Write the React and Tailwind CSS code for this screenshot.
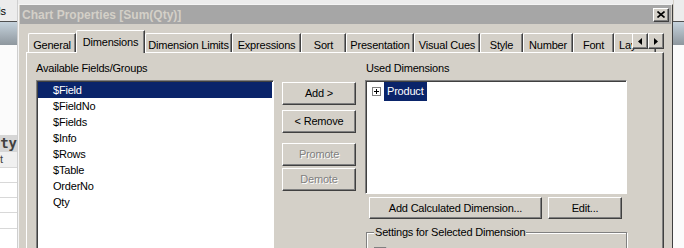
import React from 'react';

const font = { fontFamily: '"Liberation Sans", Arial, sans-serif' };

const raised =
  'border border-t-white border-l-white border-r-[#404040] border-b-[#404040] shadow-[inset_-1px_-1px_0_#808080] bg-[#d4d0c8]';
const sunken =
  'border border-t-[#808080] border-l-[#808080] border-r-white border-b-white shadow-[inset_1px_1px_0_#404040] bg-white';

const tabs = [
  { label: 'General', w: 'w-[48px]' },
  { label: 'Dimensions', w: 'w-[69px]', active: true },
  { label: 'Dimension Limits', w: 'w-[87px]' },
  { label: 'Expressions', w: 'w-[69px]' },
  { label: 'Sort', w: 'w-[45px]' },
  { label: 'Presentation', w: 'w-[68px]' },
  { label: 'Visual Cues', w: 'w-[66px]' },
  { label: 'Style', w: 'w-[43px]' },
  { label: 'Number', w: 'w-[50px]' },
  { label: 'Font', w: 'w-[41px]' },
  { label: 'Layout', w: 'w-[42px]' },
];

const fields = ['$Field', '$FieldNo', '$Fields', '$Info', '$Rows', '$Table', 'OrderNo', 'Qty'];

const Button = ({ children, disabled, className = '' }) => (
  <div className={`${raised} shrink-0 flex items-center justify-center text-[11px] tracking-[-0.2px] ${className} ${disabled ? 'text-[#808080] [text-shadow:1px_1px_0_#fff]' : 'text-black'}`}>
    {children}
  </div>
);

const Tab = ({ label, w, active }) =>
  active ? (
    <div className={`${w} h-[23px] -mb-px relative z-10 shrink-0 bg-[#d4d0c8] border-t border-l border-r border-t-white border-l-white border-r-[#404040] rounded-tl-[2px] shadow-[inset_-1px_0_0_#808080] flex justify-center pt-[3px] text-[11px] tracking-[-0.2px]`}>
      {label}
    </div>
  ) : (
    <div className={`${w} h-[19px] shrink-0 border-t border-l border-r border-t-white border-l-white border-r-[#404040] rounded-tl-[2px] shadow-[inset_-1px_0_0_#808080] flex justify-center pt-[3px] text-[11px] tracking-[-0.2px] whitespace-nowrap overflow-hidden`}>
      {label}
    </div>
  );

const ArrowBtn = ({ dir }) => (
  <div className={`${raised} w-[16px] h-[16px] shrink-0 flex items-center justify-center`}>
    <svg width="4" height="7" viewBox="0 0 4 7">
      {dir === 'left' ? <path d="M4 0 L0 3.5 L4 7 Z" fill="#000" /> : <path d="M0 0 L4 3.5 L0 7 Z" fill="#000" />}
    </svg>
  </div>
);

export default function App() {
  return (
    <div className="w-[684px] h-[248px] overflow-hidden flex bg-[#ececec] text-black" style={font}>
      {/* background app, left */}
      <div className="w-[18px] shrink-0 flex flex-col border-r border-r-[#cfcfcf] overflow-hidden">
        <div className="h-[21px] shrink-0 flex justify-end pr-[11px] pt-[3px] text-[11px] bg-[#ececec] overflow-hidden whitespace-nowrap">Fields</div>
        <div className="h-[24px] shrink-0 border-t border-t-[#505050] bg-gradient-to-b from-[#c6d3dd] to-[#8e979e]" />
        <div className="h-[90px] shrink-0 bg-[#fbfbfb]" />
        <div className="h-[17px] shrink-0 bg-[#d6d6d6] flex justify-end overflow-hidden">
          <span className="font-bold text-[14px] leading-[17px] text-[#404040] whitespace-nowrap" style={{ fontFamily: '"DejaVu Sans Mono", monospace' }}>Qty</span>
        </div>
        <div className="h-[16px] shrink-0 bg-[#f0f0f0] border-b border-b-[#d8d8d8] text-[11px] leading-[15px] text-[#404040]">t</div>
        <div className="h-[15px] shrink-0 bg-white border-b border-b-[#d8d8d8]" />
        <div className="h-[15px] shrink-0 bg-white border-b border-b-[#d8d8d8]" />
        <div className="h-[15px] shrink-0 bg-white border-b border-b-[#d8d8d8]" />
        <div className="h-[16px] shrink-0 bg-white border-b border-b-[#d8d8d8]" />
        <div className="flex-1 bg-white" />
      </div>

      {/* dialog */}
      <div className="w-[655px] shrink-0 mt-[4px] bg-[#d4d0c8] border-l border-t border-r border-l-[#f4f4f4] border-t-[#f4f4f4] border-r-[#404040] px-[1px] flex flex-col">
        <div className="h-[19px] shrink-0 bg-[#a6a6a6] flex items-center justify-between pl-[2px] pr-[2px]">
          <span className="text-[12px] font-bold text-[#d4d0c8]">Chart Properties [Sum(Qty)]</span>
          <div className={`${raised} w-[16px] h-[14px] flex items-center justify-center`}>
            <svg width="8" height="7" viewBox="0 0 8 7">
              <path d="M0.5 0.5 L7.5 6.5 M7.5 0.5 L0.5 6.5" stroke="#000" strokeWidth="1.6" />
            </svg>
          </div>
        </div>

        <div className="flex-1 pt-[6px] pl-[6px] pr-[7px]">
          {/* tab strip */}
          <div className="relative flex items-end pl-[2px] h-[22px]">
            {tabs.map((t) => (
              <Tab key={t.label} {...t} />
            ))}
            <div className="absolute right-0 top-[3px] z-20 flex">
              <ArrowBtn dir="left" />
              <ArrowBtn dir="right" />
            </div>
          </div>

          {/* tab panel */}
          <div className="h-[200px] border-t border-l border-r border-t-white border-l-white border-r-[#404040] shadow-[inset_-1px_0_0_#808080] flex text-[11px] tracking-[-0.2px]">
            <div className="ml-[9px] pt-[9px] w-[238px] shrink-0 flex flex-col">
              <div className="h-[13px] shrink-0 leading-[13px]">Available Fields/Groups</div>
              <div className={`${sunken} shrink-0 mt-[5px] h-[200px] p-px`}>
                {fields.map((f, i) => (
                  <div
                    key={f}
                    className={`h-[16px] leading-[16px] pl-[15px] ${i === 0 ? 'bg-[#0a246a] text-white' : ''}`}
                  >
                    {f}
                  </div>
                ))}
              </div>
            </div>

            <div className="ml-[8px] pt-[29px] w-[74px] shrink-0 flex flex-col">
              <Button className="h-[23px]">Add &gt;</Button>
              <Button className="h-[23px] mt-[5px]">&lt; Remove</Button>
              <Button className="h-[23px] mt-[10px]" disabled>Promote</Button>
              <Button className="h-[23px] mt-[2px]" disabled>Demote</Button>
            </div>

            <div className="ml-[9px] pt-[9px] w-[262px] shrink-0 flex flex-col">
              <div className="h-[13px] shrink-0 leading-[13px] pl-px">Used Dimensions</div>
              <div className={`${sunken} shrink-0 mt-[5px] h-[114px] p-px`}>
                <div className="h-[19px] flex items-center pl-[5px]">
                  <div className="w-[9px] h-[9px] border border-[#808080] bg-white flex items-center justify-center">
                    <svg width="5" height="5" viewBox="0 0 5 5">
                      <path d="M0 2.5 H5 M2.5 0 V5" stroke="#000" strokeWidth="1" />
                    </svg>
                  </div>
                  <div className="ml-[3px] h-[19px] px-[3px] flex items-center bg-[#0a246a] text-white">Product</div>
                </div>
              </div>
              <div className="flex shrink-0 mt-[3px] pl-[4px] gap-[6px]">
                <Button className="w-[173px] h-[22px]">Add Calculated Dimension...</Button>
                <Button className="w-[74px] h-[22px]">Edit...</Button>
              </div>
              <div className="shrink-0 ml-px mt-[13px] w-[261px] h-[40px] border border-[#808080] shadow-[inset_1px_1px_0_#fff,1px_1px_0_#fff]">
                <div className="-mt-[7px] ml-[7px] w-fit px-px bg-[#d4d0c8] leading-[13px]">Settings for Selected Dimension</div>
                <div className="flex items-center mt-[6px] ml-[7px] gap-[5px]">
                  <div className={`${sunken} w-[13px] h-[13px]`} />
                  <span>Enable Condition</span>
                </div>
              </div>
            </div>
          </div>
        </div>
      </div>

      {/* background app, right */}
      <div className="flex-1 flex flex-col">
        <div className="h-[21px] shrink-0 bg-[#ececec] border-l border-l-[#d4d0c8]" />
        <div className="h-[24px] shrink-0 border-t border-t-[#505050] bg-gradient-to-b from-[#c6d3dd] to-[#8e979e]" />
        <div className="flex-1 bg-[#fbfbfb]" />
      </div>
    </div>
  );
}
